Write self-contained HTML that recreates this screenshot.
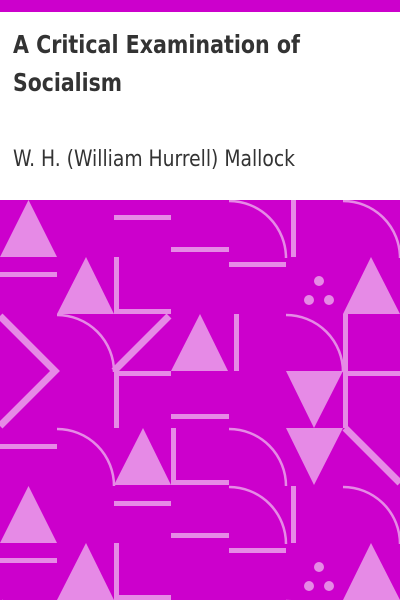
<!DOCTYPE html>
<html><head><style>
html,body{margin:0;padding:0;width:400px;height:600px;overflow:hidden;background:#fff}
</style></head><body>
<svg width="400" height="600" xmlns="http://www.w3.org/2000/svg">
<rect x="0" y="0" width="400" height="12" fill="#cc00cc"/>
<g font-family="'DejaVu Sans Condensed','DejaVu Sans',sans-serif" fill="#333">
<text x="13" y="53" font-size="25" font-weight="bold" textLength="287" lengthAdjust="spacingAndGlyphs">A Critical Examination of</text>
<text x="13" y="91" font-size="25" font-weight="bold" textLength="109" lengthAdjust="spacingAndGlyphs">Socialism</text>
<text x="13" y="166" font-size="22" textLength="282" lengthAdjust="spacingAndGlyphs">W. H. (William Hurrell) Mallock</text>
</g>
<rect x="0" y="200" width="400" height="400" fill="#cc00cc"/>
<defs>
<clipPath id="c"><rect x="0" y="200" width="400" height="400"/></clipPath>
<g id="t" fill="#e68ae6" stroke="#e68ae6">
<polygon stroke="none" points="28.5,200 57,257 0,257"/>
<polygon stroke="none" points="86,257 114,314 57,314"/>
<polygon stroke="none" points="200,314 228,371 171,371"/>
<polygon stroke="none" points="371,257 400,314 343,314"/>
<polygon stroke="none" points="143,428 171,485 114,485"/>
<polygon stroke="none" points="286,371 343,371 314,428"/>
<polygon stroke="none" points="286,428 343,428 314,485"/>
<rect stroke="none" x="0" y="272" width="57" height="5"/>
<rect stroke="none" x="114" y="215" width="57" height="5"/>
<rect stroke="none" x="171" y="247" width="58" height="5"/>
<rect stroke="none" x="114" y="257" width="5" height="57"/>
<rect stroke="none" x="114" y="309" width="57" height="5"/>
<rect stroke="none" x="114" y="371" width="5" height="57"/>
<rect stroke="none" x="114" y="371" width="57" height="5"/>
<rect stroke="none" x="291" y="200" width="5" height="57"/>
<rect stroke="none" x="229" y="262" width="57" height="5"/>
<rect stroke="none" x="234" y="314" width="5" height="57"/>
<rect stroke="none" x="343" y="314" width="5" height="114"/>
<rect stroke="none" x="343" y="371" width="57" height="5"/>
<rect stroke="none" x="171" y="414" width="58" height="5"/>
<rect stroke="none" x="0" y="444" width="57" height="5"/>
<rect stroke="none" x="171" y="428" width="5" height="57"/>
<rect stroke="none" x="171" y="480" width="58" height="5"/>
<polyline fill="none" stroke-width="7" points="0,316 55,371 0,426"/>
<polyline fill="none" stroke-width="7" points="169,316 114,371"/>
<polyline fill="none" stroke-width="7" points="345,428 400,483"/>
<path fill="none" stroke-width="2.5" d="M57,315 A57,57 0 0 1 114,372"/>
<path fill="none" stroke-width="2.5" d="M229,201 A57,57 0 0 1 286,258"/>
<path fill="none" stroke-width="2.5" d="M343,201 A57,57 0 0 1 400,258"/>
<path fill="none" stroke-width="2.5" d="M286,315 A57,57 0 0 1 343,372"/>
<path fill="none" stroke-width="2.5" d="M57,429 A57,57 0 0 1 114,486"/>
<path fill="none" stroke-width="2.5" d="M229,429 A57,57 0 0 1 286,486"/>
<circle stroke="none" cx="319" cy="281" r="5"/>
<circle stroke="none" cx="309" cy="300" r="5"/>
<circle stroke="none" cx="329" cy="300" r="5"/>
</g>
</defs>
<g clip-path="url(#c)">
<use href="#t"/>
<use href="#t" y="286"/>
</g>
</svg>
</body></html>
